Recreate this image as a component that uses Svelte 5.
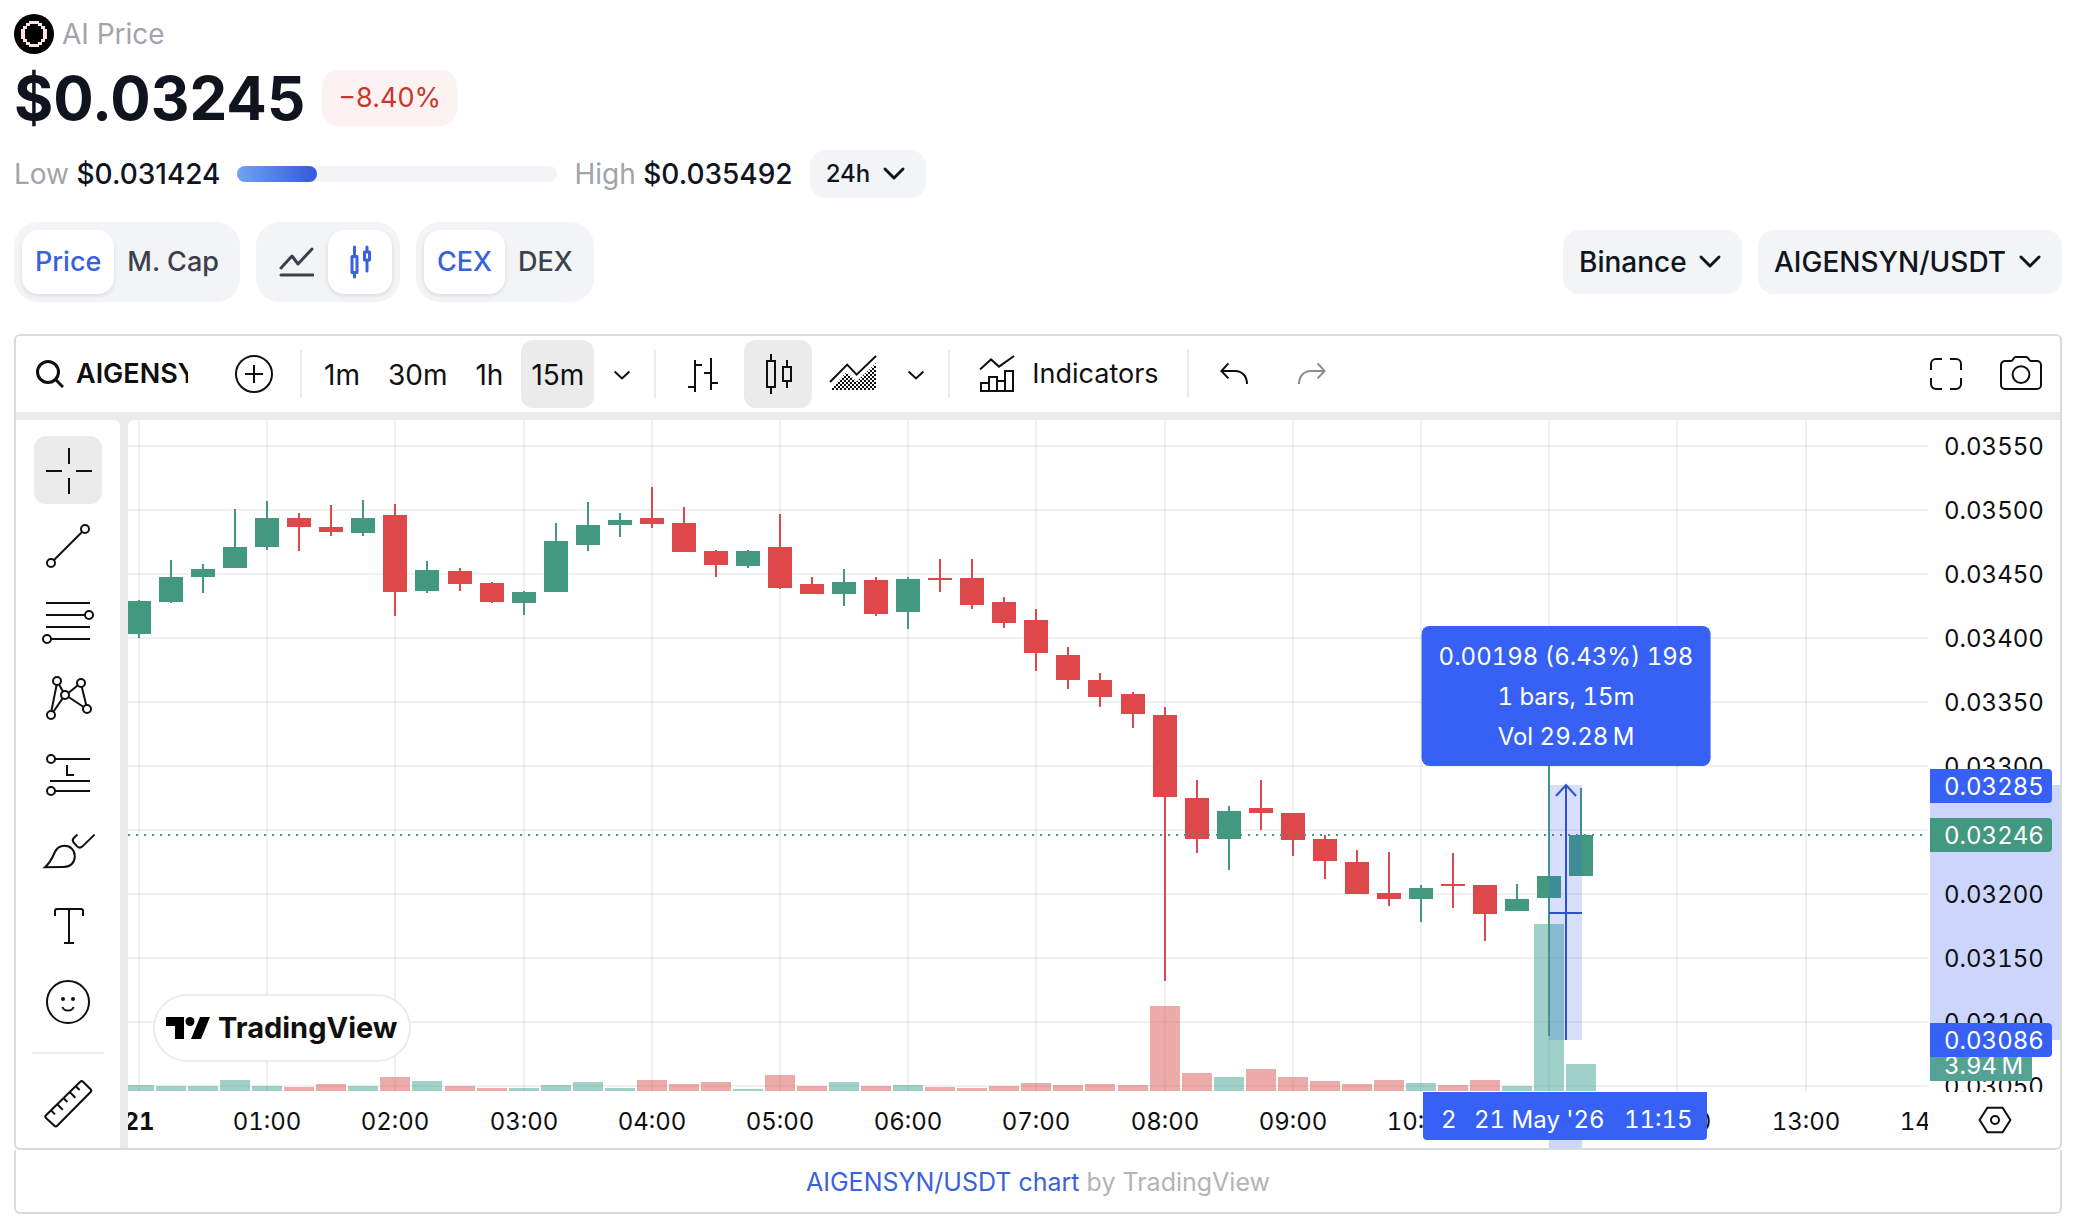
<script>
  let metric = $state("Price");
  let chartType = $state("candles");
  let source = $state("CEX");
  let interval = $state("15m");
  let style = $state("candles");
  let tool = $state("Cross");

  const intervals = ["1m", "30m", "1h", "15m"];

  // [open, high, low, close, volume height], prices in ticks of 0.00001
  const bars = [
    [3403, 3430, 3400, 3429, 6],
    [3428, 3461, 3427, 3448, 5],
    [3448, 3458, 3435, 3454, 5],
    [3455, 3501, 3455, 3471, 11],
    [3471, 3507, 3469, 3494, 5],
    [3494, 3498, 3468, 3487, 4],
    [3487, 3504, 3480, 3483, 7],
    [3482, 3508, 3480, 3494, 5],
    [3496, 3505, 3417, 3436, 14],
    [3437, 3460, 3435, 3453, 10],
    [3452, 3455, 3437, 3442, 5],
    [3443, 3444, 3427, 3428, 3],
    [3427, 3437, 3418, 3436, 3],
    [3436, 3490, 3436, 3476, 6],
    [3473, 3506, 3468, 3488, 9],
    [3488, 3498, 3479, 3492, 3],
    [3494, 3518, 3486, 3489, 11],
    [3490, 3502, 3467, 3467, 7],
    [3468, 3469, 3448, 3457, 9],
    [3456, 3469, 3455, 3468, 2],
    [3471, 3497, 3438, 3439, 16],
    [3442, 3448, 3434, 3434, 5],
    [3434, 3454, 3425, 3444, 9],
    [3445, 3448, 3417, 3419, 5],
    [3420, 3448, 3407, 3446, 6],
    [3447, 3462, 3436, 3446, 4],
    [3447, 3462, 3423, 3426, 3],
    [3428, 3432, 3408, 3412, 5],
    [3414, 3423, 3374, 3388, 8],
    [3387, 3393, 3360, 3367, 6],
    [3367, 3373, 3346, 3354, 7],
    [3356, 3358, 3330, 3341, 6],
    [3340, 3346, 3132, 3276, 85],
    [3275, 3289, 3232, 3243, 18],
    [3243, 3269, 3219, 3265, 14],
    [3267, 3289, 3250, 3263, 22],
    [3263, 3263, 3230, 3242, 14],
    [3243, 3246, 3212, 3226, 10],
    [3225, 3234, 3200, 3200, 7],
    [3201, 3233, 3191, 3196, 11],
    [3196, 3207, 3178, 3205, 8],
    [3208, 3232, 3189, 3207, 6],
    [3207, 3207, 3163, 3184, 11],
    [3187, 3208, 3187, 3196, 5],
    [3197, 3300, 3089, 3214, 167],
    [3214, 3283, 3214, 3246, 27],
  ];

  const plotHeight = 672;
  const xOf = (i) => Math.round(11 + i * 32.05);
  const yOf = (ticks) => Math.round(26 + (3550 - ticks) * 1.28);
  const priceText = (ticks) => (ticks / 100000).toFixed(5);

  const candles = bars.map(([open, high, low, close, volume], i) => ({
    x: xOf(i),
    up: close > open,
    wickTop: yOf(high),
    wickHeight: yOf(low) - yOf(high),
    top: yOf(Math.max(open, close)),
    height: Math.max(2, Math.abs(yOf(open) - yOf(close))),
    volume,
  }));

  const priceTicks = [3550, 3500, 3450, 3400, 3350, 3300, 3250, 3200, 3150, 3100, 3050];
  const timeTicks = Array.from({ length: 15 }, (_, i) => ({
    x: xOf(i * 4),
    text: i === 0 ? "21" : String(i).padStart(2, "0") + ":00",
  }));

  const last = 3246;
  const range = { from: 44, to: 45, low: 3086, high: 3285 };
  const rangeLeft = xOf(range.from);
  const rangeRight = xOf(range.to) + 1;
  const rangeMid = Math.round((rangeLeft + rangeRight) / 2);
  const rangeTop = yOf(range.high);
  const rangeBottom = yOf(range.low);
  const rangeCenter = Math.round((rangeTop + rangeBottom) / 2);
</script>

{#snippet chevron()}
  <svg class="chevron" width="24" height="24" viewBox="0 0 24 24" aria-hidden="true">
    <path d="M3 7l9 9 9-9" />
  </svg>
{/snippet}

{#snippet caret()}
  <svg class="line-icon" width="40" height="56" viewBox="0 0 20 28" aria-hidden="true">
    <path d="M6.3 12.8l3.7 3.4 3.7-3.4" />
  </svg>
{/snippet}

<main>
  <header>
    <div class="coin">
      <svg width="40" height="40" viewBox="0 0 40 40" aria-hidden="true">
        <circle cx="20" cy="20" r="20" fill="#000" />
        <path
          shape-rendering="crispEdges"
          fill="#fbe3df"
          fill-rule="evenodd"
          d="M15 7H25V9H28V12H31V15H33V25H31V28H28V31H25V33H15V31H12V28H9V25H7V15H9V12H12V9H15Z
             M16 10V12H13V15H11V25H13V28H16V30H24V28H27V25H29V15H27V12H24V10Z"
        />
      </svg>
      <span>AI Price</span>
    </div>

    <div class="quote">
      <h1>$0.03245</h1>
      <span class="change">−8.40%</span>
    </div>

    <div class="extremes">
      <p><span>Low</span> $0.031424</p>
      <div class="track"><div class="fill" style:width="25%"></div></div>
      <p><span>High</span> $0.035492</p>
      <label class="picker small">
        <select aria-label="Period">
          <option>24h</option>
        </select>
        {@render chevron()}
      </label>
    </div>
  </header>

  <div class="controls">
    <div class="segment">
      {#each ["Price", "M. Cap"] as name}
        <button class:active={metric === name} onclick={() => (metric = name)}>{name}</button>
      {/each}
    </div>
    <div class="segment icons">
      <button aria-label="Line chart" class:active={chartType === "line"} onclick={() => (chartType = "line")}>
        <svg width="36" height="36" viewBox="0 0 36 36">
          <path d="M3 24L14 12l6 8L34 5M3 31h32" />
        </svg>
      </button>
      <button aria-label="Candle chart" class:active={chartType === "candles"} onclick={() => (chartType = "candles")}>
        <svg width="36" height="36" viewBox="0 0 36 36">
          <path d="M10 12.500h5v16h-5zM12.500 3v9M12.500 29v4M22.500 8h5v8h-5zM25 3v5M25 16v11" />
        </svg>
      </button>
    </div>
    <div class="segment">
      {#each ["CEX", "DEX"] as name}
        <button class:active={source === name} onclick={() => (source = name)}>{name}</button>
      {/each}
    </div>

    <div class="markets">
      <label class="picker">
        <select aria-label="Exchange">
          <option>Binance</option>
        </select>
        {@render chevron()}
      </label>
      <label class="picker">
        <select aria-label="Pair">
          <option>AIGENSYN/USDT</option>
        </select>
        {@render chevron()}
      </label>
    </div>
  </div>

  <section class="widget">
    <div class="toolbar">
      <button class="symbol" aria-label="Symbol search">
        <svg width="28" height="28" viewBox="0 0 28 28">
          <circle cx="12" cy="12" r="10.500" />
          <path d="M19.500 19.500L27 27" />
        </svg>
        <span>AIGENSYN</span>
      </button>
      <button class="square" aria-label="Compare">
        <svg class="line-icon" width="56" height="56" viewBox="0 0 28 28">
          <circle cx="14" cy="14" r="9" />
          <path d="M14 9.500v9M9.500 14h9" />
        </svg>
      </button>
      <i class="divider"></i>
      {#each intervals as name}
        <button class="text" class:on={interval === name} onclick={() => (interval = name)}>{name}</button>
      {/each}
      <button class="narrow" aria-label="More intervals">{@render caret()}</button>
      <i class="divider"></i>
      <button class="square" class:on={style === "bars"} aria-label="Bars" onclick={() => (style = "bars")}>
        <svg class="line-icon" width="56" height="56" viewBox="0 0 28 28">
          <path d="M10.500 7v16M10.500 9.500H14M7 20.500h3.500M18.500 6v16M15 13.500h3.500M18.500 18.500H22" />
        </svg>
      </button>
      <button class="square" class:on={style === "candles"} aria-label="Candles" onclick={() => (style = "candles")}>
        <svg class="line-icon" width="56" height="56" viewBox="0 0 28 28">
          <path d="M8.500 7.500h4v13h-4zM10.500 4v3.500M10.500 20.500v3.500M16.500 10.500h4v7h-4zM18.500 7v3.500M18.500 17.500V21" />
        </svg>
      </button>
      <button class="square" class:on={style === "area"} aria-label="HLC area" onclick={() => (style = "area")}>
        <svg class="line-icon" width="56" height="56" viewBox="0 0 28 28">
          <defs>
            <pattern id="hatch" width="2" height="2" patternUnits="userSpaceOnUse">
              <path class="dot" d="M0 0h1v1H0zM1 1h1v1H1z" />
            </pattern>
          </defs>
          <path class="hatch" d="M2 22l8.300-9 5 4.800L25 8.500V22z" />
          <path d="M2 18l8.600-8.700 4.700 5L25 5" />
        </svg>
      </button>
      <button class="narrow" aria-label="More styles">{@render caret()}</button>
      <i class="divider"></i>
      <button class="indicators">
        <svg class="line-icon" width="56" height="56" viewBox="0 0 28 28" aria-hidden="true">
          <path d="M6 11.800l5.500-5.100 4 3.600L23 5" />
          <path d="M6.500 22.500v-4h4v4M10.500 22.500v-7h4v7M14.500 17.500h4M18.500 22.500v-10h4v10M6 22.500h17" />
        </svg>
        Indicators
      </button>
      <i class="divider"></i>
      <button class="square" aria-label="Undo">
        <svg class="line-icon" width="56" height="56" viewBox="0 0 28 28">
          <path d="M10.700 8.700L7.200 12.500l3.500 3.700M7.500 12.500H14c3.500 0 6 2.500 6 6.500" />
        </svg>
      </button>
      <button class="square" aria-label="Redo" disabled>
        <svg class="line-icon" width="56" height="56" viewBox="0 0 28 28">
          <path d="M17.300 8.700l3.500 3.800-3.500 3.700M20.500 12.500H14c-3.500 0-6 2.500-6 6.500" />
        </svg>
      </button>
      <div class="right">
        <button class="square" aria-label="Fullscreen">
          <svg class="line-icon" width="56" height="56" viewBox="0 0 28 28">
            <path d="M12 6.500H9A2.500 2.500 0 0 0 6.500 9v3M16 6.500h3A2.500 2.500 0 0 1 21.500 9v3M12 21.500H9A2.500 2.500 0 0 1 6.500 19v-3M16 21.500h3a2.500 2.500 0 0 0 2.500-2.500v-3" />
          </svg>
        </button>
        <button class="square" aria-label="Take a snapshot">
          <svg class="line-icon" width="56" height="56" viewBox="0 0 28 28">
            <path d="M5.500 7.500h3.200c.9 0 1-2 2-2h5.600c1 0 1.100 2 2 2h3.200a2 2 0 0 1 2 2v10a2 2 0 0 1-2 2h-16a2 2 0 0 1-2-2v-10a2 2 0 0 1 2-2z" />
            <circle cx="13.500" cy="14.300" r="4.200" />
          </svg>
        </button>
      </div>
    </div>

    <div class="body">
      <div class="sidebar">
        <button class="square" class:on={tool === "Cross"} aria-label="Cross" onclick={() => (tool = "Cross")}>
          <svg class="line-icon" width="56" height="56" viewBox="0 0 28 28">
            <path d="M18 14.500h8M3 14.500h8M14.500 18v8M14.500 3v8" />
          </svg>
        </button>
        <button class="square" class:on={tool === "Line"} aria-label="Trend line" onclick={() => (tool = "Line")}>
          <svg class="line-icon" width="56" height="56" viewBox="0 0 28 28">
            <path d="M7 21L21 7" />
            <circle cx="5.500" cy="22.500" r="2" />
            <circle cx="22.500" cy="5.500" r="2" />
          </svg>
        </button>
        <button class="square" class:on={tool === "Fib"} aria-label="Fib retracement" onclick={() => (tool = "Fib")}>
          <svg class="line-icon" width="56" height="56" viewBox="0 0 28 28">
            <path d="M3 4.500h22M3 10.500h19.500M3 16.500h22M5.500 22.500H25" />
            <circle cx="24.500" cy="10.500" r="2" />
            <circle cx="3.500" cy="22.500" r="2" />
          </svg>
        </button>
        <button class="square" class:on={tool === "Pattern"} aria-label="XABCD pattern" onclick={() => (tool = "Pattern")}>
          <svg class="line-icon" width="56" height="56" viewBox="0 0 28 28">
            <path d="M8.300 7.500l-2.600 13M9.500 7.200l2 3.600M11.300 14.200l-4.600 6.700M14.300 11.400l4.500-3.700M14.300 13.500l7.500 5M20.900 8.500l2.200 9" />
            <circle cx="8.500" cy="5.500" r="2" />
            <circle cx="20.500" cy="6.500" r="2" />
            <circle cx="12.500" cy="12.500" r="2" />
            <circle cx="5.500" cy="22.500" r="2" />
            <circle cx="23.500" cy="19.500" r="2" />
          </svg>
        </button>
        <button class="square" class:on={tool === "Position"} aria-label="Long position" onclick={() => (tool = "Position")}>
          <svg class="line-icon" width="56" height="56" viewBox="0 0 28 28">
            <path d="M7.500 6.500H25M13.500 9.500v5H17M5 17.500h20M7.500 22.500H25" />
            <circle cx="5.500" cy="6.500" r="2" />
            <circle cx="5.500" cy="22.500" r="2" />
          </svg>
        </button>
        <button class="square" class:on={tool === "Brush"} aria-label="Brush" onclick={() => (tool = "Brush")}>
          <svg class="line-icon" width="56" height="56" viewBox="0 0 28 28">
            <path d="M18.700 6.300l-1.700 1.600c-.8.800-.8 1.700-.1 2.500l1.700 1.800c.8.800 1.700.8 2.500.1l6.200-6" />
            <path d="M2.500 22.600c2.500-2.200 3.700-4.700 4.700-7.100 1-2.400 2.500-3.600 5-3.600 3.200 0 5.200 2.300 5.200 5.200 0 3.200-2.200 5.400-5.500 5.400z" />
          </svg>
        </button>
        <button class="square" class:on={tool === "Text"} aria-label="Text" onclick={() => (tool = "Text")}>
          <svg class="line-icon" width="56" height="56" viewBox="0 0 28 28">
            <path d="M7.500 9V6.500a1 1 0 0 1 1-1h12a1 1 0 0 1 1 1V9M14.500 5.500v17M12 22.500h5" />
          </svg>
        </button>
        <button class="square" class:on={tool === "Emoji"} aria-label="Emoji" onclick={() => (tool = "Emoji")}>
          <svg class="line-icon" width="56" height="56" viewBox="0 0 28 28">
            <circle cx="14" cy="14" r="10.500" />
            <circle class="dot" cx="11.500" cy="12.500" r="1" />
            <circle class="dot" cx="16.500" cy="12.500" r="1" />
            <path d="M11.200 16.500c.4 1.100 1.500 1.800 2.800 1.800s2.400-.7 2.800-1.800" />
          </svg>
        </button>
        <i class="rule"></i>
        <button class="square" class:on={tool === "Measure"} aria-label="Measure" onclick={() => (tool = "Measure")}>
          <svg class="line-icon" width="56" height="56" viewBox="0 0 28 28">
            <path d="M20.100 2.900a1 1 0 0 1 1.400 0l3.800 3.700a1 1 0 0 1 0 1.400L8.600 24.900a1 1 0 0 1-1.400 0L3 21a1 1 0 0 1 0-1.400z" />
            <path d="M5.500 17.200l2 2M8.500 14l2.900 2.900M11.700 11l2 2M14.800 8l2.900 2.900M17.800 5l2 2" />
          </svg>
        </button>
      </div>

      <div class="chart">
        <div class="plot">
          <svg width="100%" height={plotHeight} role="img" aria-label="AIGENSYN/USDT candles">
            {#each priceTicks as tick}
              <line class="grid" x1="0" x2="100%" y1={yOf(tick)} y2={yOf(tick)} />
            {/each}
            {#each timeTicks as tick}
              <line class="grid" x1={tick.x} x2={tick.x} y1="0" y2={plotHeight} />
            {/each}
            {#each candles as c}
              <rect
                class={c.up ? "vol-up" : "vol-down"}
                x={c.x - 15}
                y={plotHeight - 1 - c.volume}
                width="30"
                height={c.volume}
              />
            {/each}
            {#each candles as c}
              <g class={c.up ? "up" : "down"}>
                <rect x={c.x - 1} y={c.wickTop} width="2" height={c.wickHeight} />
                <rect x={c.x - 12} y={c.top} width="24" height={c.height} />
              </g>
            {/each}
            <line class="last" x1="0" x2="100%" y1={yOf(last)} y2={yOf(last)} />
            <rect
              class="range"
              x={rangeLeft}
              y={rangeTop}
              width={rangeRight - rangeLeft}
              height={rangeBottom - rangeTop}
            />
            <path
              class="arrow"
              d="M{rangeMid} {rangeBottom}V{rangeTop}M{rangeMid - 10} {rangeTop + 11}L{rangeMid} {rangeTop}L{rangeMid + 10} {rangeTop + 11}M{rangeLeft} {rangeCenter}H{rangeRight}"
            />
          </svg>
          <div class="tooltip" style:left="{rangeMid}px">
            <span>0.00198 (6.43%) 198</span>
            <span>1 bars, 15m</span>
            <span>Vol 29.28&thinsp;M</span>
          </div>
          <a class="brand" href="https://www.tradingview.com/">
            <svg width="44" height="22" viewBox="0 0 44 22" aria-hidden="true">
              <path d="M0 0h18v22H9V9H0zM35 22H25L34 0h10z" />
              <circle cx="24" cy="4.500" r="4.500" />
            </svg>
            TradingView
          </a>
        </div>

        <svg class="price-axis" width="132" height={plotHeight}>
          <rect class="shade" x="2" y={rangeTop} width="130" height={rangeBottom - rangeTop} />
          {#each priceTicks as tick}
            {#if tick !== 3250}
              <text x="16" y={yOf(tick) + 9}>{priceText(tick)}</text>
            {/if}
          {/each}
          <rect class="vol-badge" x="2" y="627" width="102" height="34" />
          <text class="light" x="16" y="654">3.94&thinsp;M</text>
          <path class="up" d="M2 398h118a4 4 0 0 1 4 4v26a4 4 0 0 1-4 4H2z" />
          <text class="light" x="16" y="424">{priceText(last)}</text>
          <path class="blue" d="M2 349h118a4 4 0 0 1 4 4v26a4 4 0 0 1-4 4H2z" />
          <text class="light" x="16" y="375">{priceText(range.high)}</text>
          <path class="blue" d="M2 603h118a4 4 0 0 1 4 4v26a4 4 0 0 1-4 4H2z" />
          <text class="light" x="16" y="629">{priceText(range.low)}</text>
        </svg>

        <svg class="time-axis" width="100%" height="56">
          <rect class="shade" x={rangeLeft} y="0" width={rangeRight - rangeLeft} height="56" />
          {#each timeTicks as tick, i}
            <text class:day={i === 0} x={tick.x} y="38" text-anchor="middle">{tick.text}</text>
          {/each}
          <path class="blue" d="M{rangeLeft - 126} 0h252v44a4 4 0 0 1-4 4h-244a4 4 0 0 1-4-4z" />
          <text class="light" x={rangeLeft - 108} y="36">21 May '26   11:00</text>
          <path class="blue" d="M{rangeRight - 127} 0h252v44a4 4 0 0 1-4 4h-244a4 4 0 0 1-4-4z" />
          <text class="light" x={rangeRight - 108} y="36">21 May '26   11:15</text>
        </svg>

        <button class="settings" aria-label="Axis settings">
          <svg class="line-icon" width="56" height="56" viewBox="0 0 28 28">
            <path d="M10.200 7.900h7.600L21.700 14l-3.900 6.100h-7.600L6.300 14z" />
            <circle cx="14" cy="14" r="2" />
          </svg>
        </button>
      </div>
    </div>
  </section>

  <footer>
    <a href="https://www.tradingview.com/symbols/AIGENSYNUSDT/">AIGENSYN/USDT chart</a> by TradingView
  </footer>
</main>

<style>
  :global(body) {
    margin: 0;
    background: #fff;
  }

  main {
    padding: 14px 12px 16px 14px;
    font-family: Inter, "Liberation Sans", sans-serif;
    font-size: 28px;
    line-height: 40px;
    color: #0f0f0f;
  }

  h1,
  p {
    margin: 0;
  }

  button,
  select {
    border: 0;
    margin: 0;
    background: none;
    font: inherit;
    color: inherit;
    cursor: pointer;
  }

  a {
    text-decoration: none;
  }

  svg {
    display: block;
    flex: none;
  }

  header {
    display: flex;
    flex-direction: column;
  }

  .coin {
    display: flex;
    align-items: center;
    gap: 8px;
    color: #a1a4ac;
  }

  .quote {
    display: flex;
    align-items: center;
    gap: 17px;
    margin-top: 16px;
  }

  h1 {
    font-size: 60px;
    line-height: 56px;
    font-weight: 700;
    color: #10141f;
  }

  .change {
    padding: 8px 16px;
    border-radius: 16px;
    background: #fdf2f2;
    color: #c9372f;
    font-size: 27px;
  }

  .extremes {
    display: flex;
    align-items: center;
    gap: 17px;
    margin-top: 24px;
    color: #10141f;
  }

  .extremes p {
    font-weight: 500;
  }

  .extremes p span {
    font-weight: 400;
    color: #a1a4ac;
  }

  .track {
    width: 320px;
    height: 16px;
    border-radius: 8px;
    background: #f2f4f5;
  }

  .fill {
    height: 16px;
    border-radius: 8px;
    background: linear-gradient(90deg, #70a4f1, #3459dc);
  }

  .picker {
    display: inline-grid;
    align-items: center;
    height: 64px;
    border-radius: 16px;
    background: #f2f4f6;
    color: #10141f;
    font-weight: 500;
  }

  .picker select {
    grid-area: 1 / 1;
    appearance: none;
    height: 100%;
    padding: 0 55px 0 16px;
    border-radius: 16px;
  }

  .picker .chevron {
    grid-area: 1 / 1;
    justify-self: end;
    margin-right: 20px;
    pointer-events: none;
  }

  .picker.small {
    height: 48px;
    font-size: 24px;
  }

  .chevron {
    fill: none;
    stroke: #10141f;
    stroke-width: 3;
    stroke-linecap: round;
    stroke-linejoin: round;
  }

  .controls {
    display: flex;
    align-items: center;
    gap: 16px;
    margin: 24px 0 32px;
  }

  .segment {
    display: flex;
    padding: 8px;
    border-radius: 24px;
    background: #f2f4f6;
    color: #3c404d;
    font-size: 27px;
    font-weight: 500;
  }

  .segment button {
    height: 64px;
    padding: 0 13px;
    border-radius: 16px;
  }

  .segment.icons button {
    width: 64px;
    padding: 0 14px;
  }

  .segment svg {
    fill: none;
    stroke: currentColor;
    stroke-width: 3;
    stroke-linecap: round;
    stroke-linejoin: round;
  }

  .segment .active {
    background: #fff;
    color: #3861dd;
    box-shadow: 0 2px 4px rgba(20, 30, 60, 0.1);
  }

  .markets {
    display: flex;
    gap: 16px;
    margin-left: auto;
  }

  .widget {
    border: 2px solid #d9dadb;
    border-radius: 6px;
    overflow: hidden;
    background: #ebebeb;
  }

  .toolbar {
    display: flex;
    align-items: center;
    height: 76px;
    background: #fff;
  }

  .toolbar button {
    display: flex;
    align-items: center;
    flex: none;
    height: 68px;
    border-radius: 12px;
  }

  .toolbar button + button {
    margin-left: 8px;
  }

  .toolbar .on,
  .sidebar .on {
    background: #ebebeb;
  }

  .toolbar button:disabled {
    color: #8c8c8c;
    cursor: default;
  }

  .toolbar .symbol {
    gap: 12px;
    padding: 0 24px 0 20px;
    font-size: 27px;
    font-weight: 600;
  }

  .symbol span {
    width: 112px;
    overflow: hidden;
    white-space: nowrap;
  }

  .symbol svg {
    fill: none;
    stroke: currentColor;
    stroke-width: 3;
  }

  .square {
    width: 68px;
    height: 68px;
    padding: 6px;
    border-radius: 12px;
  }

  .narrow {
    width: 40px;
    padding: 0;
  }

  .text {
    padding: 2px 10px 0;
  }

  .indicators {
    gap: 8px;
    padding: 0 16px 0 6px;
    font-size: 27px;
  }

  .divider {
    width: 2px;
    height: 48px;
    margin: 0 12px;
    background: #ebebeb;
  }

  .right {
    display: flex;
    margin-left: auto;
    padding-right: 4px;
  }

  .line-icon {
    fill: none;
    stroke: currentColor;
    stroke-width: 1;
  }

  .line-icon .dot {
    fill: currentColor;
    stroke: none;
  }

  .line-icon .hatch {
    fill: url(#hatch);
    stroke: none;
  }

  .body {
    display: flex;
    gap: 8px;
    margin-top: 8px;
  }

  .sidebar {
    display: flex;
    flex-direction: column;
    align-items: center;
    gap: 8px;
    width: 104px;
    padding-top: 16px;
    box-sizing: border-box;
    border-top-right-radius: 6px;
    background: #fff;
  }

  .rule {
    width: 72px;
    height: 2px;
    margin: 8px 0;
    background: #ebebeb;
  }

  .chart {
    flex: 1;
    min-width: 0;
    display: grid;
    grid-template-columns: minmax(0, 1fr) 132px;
    border-top-left-radius: 6px;
    background: #fff;
    font-size: 24px;
    font-variant-numeric: tabular-nums;
  }

  .plot {
    position: relative;
    overflow: hidden;
  }

  .grid {
    stroke: #000;
    stroke-opacity: 0.06;
    stroke-width: 2;
  }

  .up {
    fill: #439880;
  }

  .down {
    fill: #df484a;
  }

  .vol-up {
    fill: #3fa394;
    fill-opacity: 0.5;
  }

  .vol-down {
    fill: #d95754;
    fill-opacity: 0.5;
  }

  .last {
    stroke: #439880;
    stroke-width: 2;
    stroke-dasharray: 2 6;
  }

  .range {
    fill: #3761f5;
    fill-opacity: 0.2;
  }

  .arrow {
    fill: none;
    stroke: #2f52c6;
    stroke-width: 2;
  }

  .tooltip {
    position: absolute;
    top: 206px;
    transform: translateX(-50%);
    display: flex;
    flex-direction: column;
    align-items: center;
    padding: 11px 17px 9px;
    border-radius: 8px;
    background: #3761f5;
    color: #fff;
    white-space: nowrap;
  }

  .brand {
    position: absolute;
    left: 25px;
    bottom: 30px;
    display: flex;
    align-items: center;
    gap: 8px;
    padding: 12px 11px;
    border: 2px solid #ebebeb;
    border-radius: 34px;
    background: #fff;
    color: #0f0f0f;
    font-size: 29px;
    font-weight: 700;
  }

  .shade {
    fill: #ccd6fd;
  }

  .blue {
    fill: #3761f5;
  }

  .vol-badge {
    fill: #53a294;
  }

  text {
    fill: #0f0f0f;
    white-space: pre;
  }

  text.light {
    fill: #fff;
  }

  text.day {
    font-weight: 700;
  }

  .settings {
    width: 56px;
    height: 56px;
    padding: 0;
    margin: 0 0 0 39px;
  }

  footer {
    padding: 12px 16px 10px;
    border: 2px solid #d9dadb;
    border-top: 0;
    border-radius: 0 0 6px 6px;
    font-size: 25px;
    text-align: center;
    color: #b2b4b8;
  }

  footer a {
    color: #3a62db;
  }
</style>
